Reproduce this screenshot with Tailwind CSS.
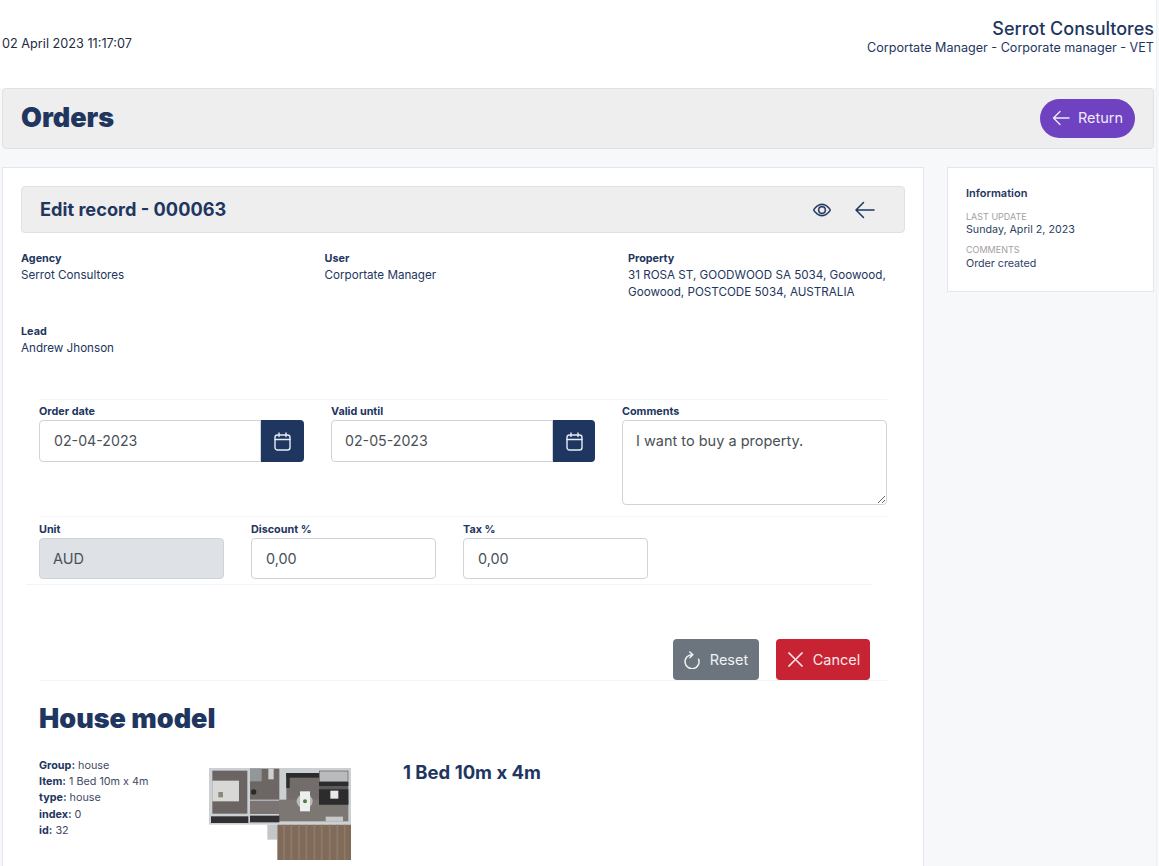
<!DOCTYPE html>
<html lang="en">
<head>
  <meta charset="UTF-8">
  <meta name="viewport" content="width=device-width, initial-scale=1">
  <title>Orders</title>
  <script src="https://cdn.jsdelivr.net/npm/@tailwindcss/browser@4"></script>
</head>
<body class="bg-[#f7f8fa] h-[866px] overflow-hidden font-[Inter,sans-serif] text-[#1e3660]">
  <div class="w-[1156px] h-[866px] flex flex-col border-r border-[#f0f0f0] box-content overflow-hidden">

    <header class="bg-white h-[88px] shrink-0 flex justify-between items-center pl-[2px] pr-[2px]">
      <div class="text-[12.7px] text-[#212b40]">02 April 2023 11:17:07</div>
      <div class="text-right mb-[14px]">
        <div class="text-[18px] leading-[21px] font-medium">Serrot Consultores</div>
        <div class="text-[12.6px] leading-[17px]">Corportate Manager - Corporate manager - VET</div>
      </div>
    </header>

    <div class="mx-[2px] h-[61px] shrink-0 bg-[#eeeeee] border border-[#dee2e6] rounded flex items-center justify-between pl-[18px] pr-[18px]">
      <h1 class="text-[27px] font-black">Orders</h1>
      <button class="h-[39px] w-[95px] mb-[1px] rounded-full bg-[#6f42c1] text-[#f0ebfa] text-[14.5px] flex items-center justify-center gap-[8px]">
        <svg class="w-[18px] h-[16px]" viewBox="0 0 18 16" fill="none" stroke="currentColor" stroke-width="1.4" stroke-linecap="round" stroke-linejoin="round"><path d="M17 8H1.5M8 1.5 1.5 8 8 14.5"/></svg>
        Return
      </button>
    </div>

    <div class="mt-[18px] ml-[2px] mr-[2px] flex gap-[23px] items-start">
      <main class="w-[922px] h-[720px] shrink-0 bg-white border border-[#e2e6ee] pt-[18px] pl-[18px] pr-[18px]">
        <div class="h-[47px] bg-[#eeeeee] border border-[#dee2e6] rounded flex items-center justify-between pl-[18px] pr-[29px]">
          <h2 class="text-[18.2px] font-bold">Edit record - 000063</h2>
          <div class="flex items-center gap-[23px]">
            <svg class="w-[18px] h-[18px]" viewBox="0 0 16 16" fill="currentColor" stroke="currentColor" stroke-width="0.35"><path d="M16 8s-3-5.5-8-5.5S0 8 0 8s3 5.5 8 5.5S16 8 16 8zM1.173 8a13.133 13.133 0 0 1 1.66-2.043C4.12 4.668 5.88 3.5 8 3.5c2.12 0 3.879 1.168 5.168 2.457A13.133 13.133 0 0 1 14.828 8c-.058.087-.122.183-.195.288-.335.48-.83 1.12-1.465 1.755C11.879 11.332 10.119 12.5 8 12.5c-2.12 0-3.879-1.168-5.168-2.457A13.134 13.134 0 0 1 1.172 8z"/><path d="M8 5.5a2.5 2.5 0 1 0 0 5 2.5 2.5 0 0 0 0-5zM4.5 8a3.5 3.5 0 1 1 7 0 3.5 3.5 0 0 1-7 0z"/></svg>
            <svg class="w-[21px] h-[18px]" viewBox="0 0 21 18" fill="none" stroke="currentColor" stroke-width="1.5" stroke-linecap="round" stroke-linejoin="round"><path d="M20 9H2M9.5 1.5 2 9l7.5 7.5"/></svg>
          </div>
        </div>

        <div class="grid grid-cols-[303.5px_303.5px_1fr] mt-[18px] text-[11.65px] leading-[17px]">
          <div class="h-[73px]">
            <div class="text-[10.8px] font-bold leading-[16px]">Agency</div>
            <div>Serrot Consultores</div>
          </div>
          <div>
            <div class="text-[10.8px] font-bold leading-[16px]">User</div>
            <div>Corportate Manager</div>
          </div>
          <div>
            <div class="text-[10.8px] font-bold leading-[16px]">Property</div>
            <div>31 ROSA ST, GOODWOOD SA 5034, Goowood,<br>Goowood, POSTCODE 5034, AUSTRALIA</div>
          </div>
          <div>
            <div class="text-[10.8px] font-bold leading-[16px]">Lead</div>
            <div>Andrew Jhonson</div>
          </div>
        </div>

        <div class="ml-[18px] w-[848px] mt-[42px] border-t border-[#f3f4f6] h-[117px] pt-[4px] flex">
          <div class="w-[292px]">
            <label class="block text-[10.8px] font-bold leading-[16px]">Order date</label>
            <div class="flex w-[265px] h-[42px]">
              <input value="02-04-2023" class="w-[222px] h-full border border-[#ced4da] rounded-l pl-[14px] pb-[2px] text-[14.2px] text-[#495057] outline-none">
              <div class="w-[43px] h-full bg-[#1e3660] rounded-r flex items-center justify-center text-[#e6edf7]">
                <svg class="w-[17px] h-[19px]" viewBox="0 0 17 19" fill="none" stroke="currentColor" stroke-width="1.4" stroke-linecap="round"><rect x="1" y="3" width="15" height="15" rx="2.5"/><path d="M1 7.5h15M5 1v3.5M12 1v3.5"/></svg>
              </div>
            </div>
          </div>
          <div class="w-[291px]">
            <label class="block text-[10.8px] font-bold leading-[16px]">Valid until</label>
            <div class="flex w-[264px] h-[42px]">
              <input value="02-05-2023" class="w-[222px] h-full border border-[#ced4da] rounded-l pl-[13px] pb-[2px] text-[14.2px] text-[#495057] outline-none">
              <div class="w-[42px] h-full bg-[#1e3660] rounded-r flex items-center justify-center text-[#e6edf7]">
                <svg class="w-[17px] h-[19px]" viewBox="0 0 17 19" fill="none" stroke="currentColor" stroke-width="1.4" stroke-linecap="round"><rect x="1" y="3" width="15" height="15" rx="2.5"/><path d="M1 7.5h15M5 1v3.5M12 1v3.5"/></svg>
              </div>
            </div>
          </div>
          <div class="w-[265px]">
            <label class="block text-[10.8px] font-bold leading-[16px]">Comments</label>
            <textarea class="block w-[265px] h-[85px] border border-[#ced4da] rounded pl-[13px] pt-[9px] text-[14.5px] leading-[21px] text-[#495057] outline-none">I want to buy a property.</textarea>
          </div>
        </div>

        <div class="ml-[18px] w-[848px] border-t border-[#f3f4f6] pt-[5px] flex gap-[27px]">
          <div class="w-[185px]">
            <label class="block text-[10.8px] font-bold leading-[16px]">Unit</label>
            <input disabled value="AUD" class="w-full h-[41px] bg-[#dee1e5] border border-[#ced4da] rounded pl-[13px] text-[14.5px] text-[#495057]">
          </div>
          <div class="w-[185px]">
            <label class="block text-[10.8px] font-bold leading-[16px]">Discount %</label>
            <input value="0,00" class="w-full h-[41px] border border-[#ced4da] rounded pl-[14px] text-[14.4px] text-[#495057] outline-none">
          </div>
          <div class="w-[185px]">
            <label class="block text-[10.8px] font-bold leading-[16px]">Tax %</label>
            <input value="0,00" class="w-full h-[41px] border border-[#ced4da] rounded pl-[14px] text-[14.4px] text-[#495057] outline-none">
          </div>
        </div>

        <div class="ml-[5px] w-[846px] mt-[5px] border-t border-[#f3f4f6] pt-[54px] flex justify-end gap-[17px] pr-[2px]">
          <button class="w-[86px] h-[41px] bg-[#6c757d] rounded text-[#f0f2f4] text-[14.5px] flex items-center justify-center gap-[10px]">
            <svg class="w-[16px] h-[18px] mt-[1px]" viewBox="0 0 16 18" fill="none" stroke="currentColor" stroke-width="1.5" stroke-linecap="round" stroke-linejoin="round"><path d="M8 3.7A7 7 0 1 0 14.6 8.2"/><path d="M5.8 1 8.8 3.7 6 6.6"/></svg>
            Reset
          </button>
          <button class="w-[94px] h-[41px] bg-[#c82333] rounded text-[#f8e9eb] text-[14.5px] flex items-center justify-center gap-[8px]">
            <svg class="w-[19px] h-[19px]" viewBox="0 0 16 16" fill="currentColor" stroke="currentColor" stroke-width="0.4"><path d="M2.146 2.854a.5.5 0 1 1 .708-.708L8 7.293l5.146-5.147a.5.5 0 0 1 .708.708L8.707 8l5.147 5.146a.5.5 0 0 1-.708.708L8 8.707l-5.146 5.147a.5.5 0 0 1-.708-.708L7.293 8 2.146 2.854Z"/></svg>
            Cancel
          </button>
        </div>

        <div class="ml-[18px] w-[848px] border-t border-[#f3f4f6]">
          <h2 class="text-[27px] leading-[34px] font-black mt-[21px]">House model</h2>
          <div class="flex mt-[22px]">
            <div class="w-[170px] text-[10.8px] leading-[16.2px] text-[#3f4a63]">
              <div><b class="font-bold text-[#1e3660]">Group:</b> house</div>
              <div><b class="font-bold text-[#1e3660]">Item:</b> 1 Bed 10m x 4m</div>
              <div><b class="font-bold text-[#1e3660]">type:</b> house</div>
              <div><b class="font-bold text-[#1e3660]">index:</b> 0</div>
              <div><b class="font-bold text-[#1e3660]">id:</b> 32</div>
            </div>
            <svg class="w-[142px] h-[92px] mt-[10px] shrink-0 blur-[0.6px]" viewBox="0 0 426 276">
              <rect width="426" height="170" fill="#cdd0d3"/>
              <rect x="10" y="8" width="105" height="129" fill="#6a6563"/>
              <rect x="10" y="38" width="80" height="62" fill="#d8d8d6"/>
              <rect x="28" y="72" width="14" height="16" fill="#8b8a78"/>
              <rect x="123" y="2" width="88" height="93" fill="#6c6764"/>
              <rect x="123" y="2" width="35" height="38" fill="#92979a"/>
              <rect x="178" y="2" width="16" height="32" fill="#cfcfcf"/>
              <circle cx="134" cy="72" r="8" fill="#2a2a2c"/>
              <rect x="232" y="15" width="98" height="85" fill="#726d6b"/>
              <rect x="232" y="15" width="98" height="14" fill="#2c2b2e"/>
              <rect x="232" y="15" width="10" height="45" fill="#2c2b2e"/>
              <rect x="123" y="98" width="87" height="40" fill="#7a7472"/>
              <rect x="210" y="95" width="208" height="65" fill="#7d7774"/>
              <rect x="330" y="8" width="88" height="102" fill="#5e5a5a"/>
              <rect x="332" y="10" width="84" height="30" fill="#b9bbbc"/>
              <rect x="330" y="42" width="88" height="12" fill="#2c2b2e"/>
              <rect x="330" y="64" width="88" height="46" fill="#2c2b2e"/>
              <rect x="364" y="68" width="24" height="24" fill="#e8e8e8"/>
              <rect x="350" y="146" width="52" height="14" fill="#c6c8ca"/>
              <ellipse cx="287" cy="100" rx="24" ry="22" fill="#b9bab9"/>
              <rect x="273" y="70" width="30" height="60" fill="#eeeeee"/>
              <circle cx="288" cy="100" r="6" fill="#4f7d45"/>
              <rect x="6" y="145" width="112" height="20" fill="#302f31"/>
              <rect x="123" y="143" width="88" height="20" fill="#302f31"/>
              <rect x="175" y="170" width="30" height="45" fill="#c4c7ca"/>
              <rect x="205" y="170" width="221" height="106" fill="#806b5b"/>
              <path d="M225 170v106M247 170v106M270 170v106M292 170v106M316 170v106M338 170v106M362 170v106M385 170v106M407 170v106" stroke="#8f7a68" stroke-width="5"/>
            </svg>
            <div class="ml-[52px] mt-[2px] text-[18.5px] leading-[24px] font-bold">1 Bed 10m x 4m</div>
          </div>
        </div>
      </main>

      <aside class="w-[207px] h-[125px] bg-white border border-[#e2e6ee] pl-[18px] pt-[18px] text-[11px] leading-[14px]">
        <div class="font-semibold">Information</div>
        <div class="mt-[10px] text-[9px] leading-[13px] text-[#a39e9e]">LAST UPDATE</div>
        <div class="text-[10.7px] leading-[14px] text-[#2d3f63]">Sunday, April 2, 2023</div>
        <div class="mt-[6px] text-[9px] leading-[13px] text-[#a39e9e]">COMMENTS</div>
        <div class="mt-[1px] text-[10.7px] text-[#2d3f63]">Order created</div>
      </aside>
    </div>
  </div>
</body>
</html>
